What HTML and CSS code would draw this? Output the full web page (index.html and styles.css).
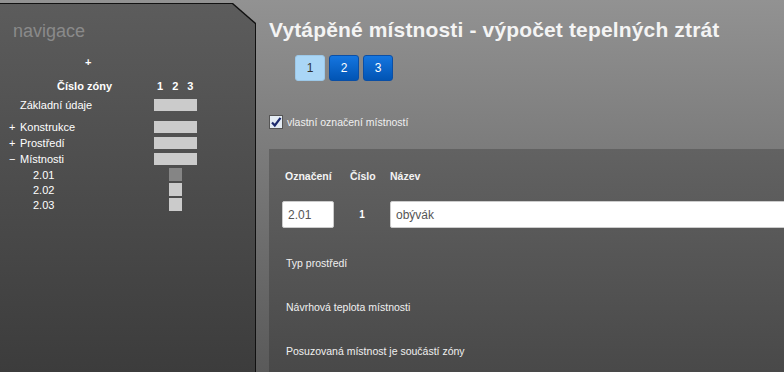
FILE: index.html
```html
<!DOCTYPE html>
<html lang="cs">
<head>
  <meta charset="UTF-8" />
  <title>Vytápěné místnosti</title>
  <link rel="stylesheet" href="styles.css">
</head>
<body>

  <div class="nav-frame">
    <div class="nav">
      <div class="nav-title">navigace</div>
      <div class="nav-plus">+</div>

      <div class="nav-head">
        <span class="nav-label">Číslo zóny</span>
        <span class="zones"><span>1</span><span>2</span><span>3</span></span>
      </div>

      <div class="nav-row first">
        <span class="nav-label">Základní údaje</span>
        <span class="bar"></span>
      </div>
      <div class="nav-row gap">
        <span class="nav-label"><i>+</i>Konstrukce</span>
        <span class="bar"></span>
      </div>
      <div class="nav-row">
        <span class="nav-label"><i>+</i>Prostředí</span>
        <span class="bar"></span>
      </div>
      <div class="nav-row">
        <span class="nav-label"><i>−</i>Místnosti</span>
        <span class="bar"></span>
      </div>
      <div class="nav-row sub">
        <span class="nav-label">2.01</span>
        <span class="bar small active"></span>
      </div>
      <div class="nav-row sub">
        <span class="nav-label">2.02</span>
        <span class="bar small"></span>
      </div>
      <div class="nav-row sub">
        <span class="nav-label">2.03</span>
        <span class="bar small"></span>
      </div>
    </div>
  </div>

  <div class="main">
    <h1>Vytápěné místnosti - výpočet tepelných ztrát</h1>

    <div class="tabs">
      <button class="tab current">1</button>
      <button class="tab">2</button>
      <button class="tab">3</button>
    </div>

    <label class="own-name">
      <span class="check">
        <svg width="12" height="12" viewBox="0 0 12 12"><path d="M2 6.5 L4.8 9.5 L10.5 1.8" fill="none" stroke="#1c2a6e" stroke-width="2.2"/></svg>
      </span>
      vlastní označení místností
    </label>

    <div class="panel">
      <div class="cols">
        <span class="c-mark">Označení</span>
        <span class="c-num">Číslo</span>
        <span>Název</span>
      </div>
      <div class="room">
        <input class="in-mark" type="text" value="2.01">
        <span class="room-num">1</span>
        <input class="in-name" type="text" value="obývák">
      </div>
      <p class="field">Typ prostředí</p>
      <p class="field">Návrhová teplota místnosti</p>
      <p class="field">Posuzovaná místnost je součástí zóny</p>
    </div>
  </div>

</body>
</html>
```

FILE: styles.css
```css
body {
  margin: 0;
  padding: 0;
  height: 372px;
  overflow: hidden;
  display: flex;
  font-family: "Liberation Sans", Arial, sans-serif;
  color: white;
  background: linear-gradient(#929292, #5a5a5a);
}
.nav-frame {
  width: 256px;
  flex-shrink: 0;
  margin-top: 3px;
  background: #111;
  clip-path: polygon(0 0, 233px 0, 100% 20px, 100% 100%, 0 100%);
}
.nav {
  height: 100%;
  margin: 1px 1px 0 0;
  background: linear-gradient(#5c5c5c, #3c3c3c);
  clip-path: polygon(0 0, 232px 0, 100% 20px, 100% 100%, 0 100%);
}
.nav-title {
  padding: 17px 0 0 13px;
  font-size: 18px;
  color: #8a8a8a;
  height: 30px;
}
.nav-plus {
  padding-left: 85px;
  font-size: 11px;
  font-weight: bold;
  height: 27px;
  line-height: 22px;
}
.nav-head {
  display: flex;
  align-items: center;
  height: 16px;
  font-size: 11px;
  font-weight: bold;
}
.nav-head .nav-label {
  width: 157px;
  padding-left: 57px;
  box-sizing: border-box;
}
.zones {
  display: flex;
  gap: 9px;
}
.nav-row {
  display: flex;
  align-items: center;
  height: 16px;
  font-size: 11px;
}
.nav-row.first {
  margin-top: 4px;
  height: 13px;
}
.nav-row.gap {
  margin-top: 8px;
}
.nav-row .nav-label {
  width: 154px;
  padding-left: 9px;
  box-sizing: border-box;
}
.nav-label i {
  font-style: normal;
  display: inline-block;
  width: 11px;
}
.nav-row.first .nav-label {
  padding-left: 20px;
}
.bar {
  width: 43px;
  height: 12px;
  background: #cbcbcb;
}
.nav-row.sub {
  height: 15px;
}
.nav-row.sub .nav-label {
  width: 169px;
  padding-left: 33px;
}
.bar.small {
  width: 13px;
  height: 13px;
}
.bar.active {
  background: #858585;
}
.main {
  flex: 1;
  padding-left: 13px;
  min-width: 0;
}
h1 {
  margin: 18px 0 0 0;
  font-size: 21px;
  letter-spacing: 0.15px;
  line-height: 24px;
  font-weight: bold;
  color: #f4f4f4;
  white-space: nowrap;
}
.tabs {
  display: flex;
  gap: 4px;
  margin: 13px 0 0 26px;
}
.tab {
  width: 30px;
  height: 26px;
  padding: 0;
  border: 1px solid #0a4fa6;
  border-radius: 3px;
  background: linear-gradient(#1576e0, #0154b4);
  color: white;
  font-family: "Liberation Sans", Arial, sans-serif;
  font-size: 12px;
}
.tab.current {
  background: #aad6f6;
  border-color: #9cc8e8;
  color: #333;
}
.own-name {
  display: flex;
  align-items: center;
  gap: 4px;
  margin-top: 34px;
  font-size: 10.5px;
  color: #f0f0f0;
}
.check {
  width: 12px;
  height: 12px;
  border: 1px solid #555;
  background: #e4ecf4;
  display: flex;
}
.panel {
  margin-top: 20px;
  height: 230px;
  background: linear-gradient(#626262, #484848);
  padding-left: 13px;
}
.cols {
  display: flex;
  font-size: 10.5px;
  font-weight: bold;
  padding: 21px 0 0 3px;
  height: 31px;
  color: #f4f4f4;
}
.c-mark {
  width: 65px;
}
.c-num {
  width: 40px;
}
.room {
  display: flex;
  align-items: center;
}
.room input {
  height: 27px;
  box-sizing: border-box;
  border: 1px solid #ccc;
  border-radius: 2px;
  background: white;
  font-family: "Liberation Sans", Arial, sans-serif;
  font-size: 12px;
  color: #555;
  padding: 0 5px;
}
.in-mark {
  width: 52px;
}
.room-num {
  width: 56px;
  text-align: center;
  font-size: 10px;
  font-weight: bold;
}
.in-name {
  flex: 1;
  margin-right: -10px;
}
.field {
  margin: 0;
  font-size: 10.5px;
  height: 44px;
  line-height: 14px;
  color: #f0f0f0;
  padding-left: 4px;
}
.room + .field {
  margin-top: 28px;
}
```
